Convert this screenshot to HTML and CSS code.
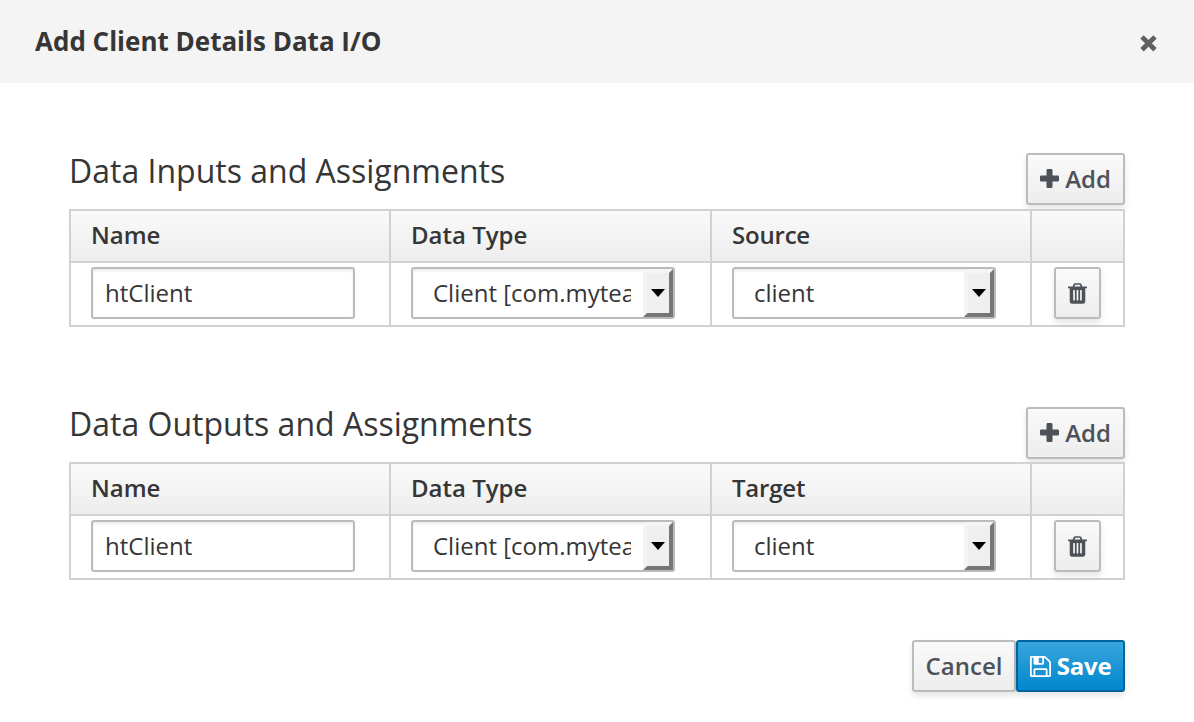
FILE: index.html
```html
<!DOCTYPE html>
<html lang="en">
<head>
<meta charset="utf-8">
<title>Add Client Details Data I/O</title>
<link rel="stylesheet" href="styles.css">
</head>
<body>
<svg class="symbols" width="0" height="0" aria-hidden="true">
  <symbol id="plus" viewBox="0 0 19 19"><path d="M7.8 0h3.4q1.3 0 1.3 1.3v5.2h5.200q1.300 0 1.300 1.300v3.400q0 1.300-1.300 1.300h-5.200v5.200q0 1.300-1.300 1.300H7.800q-1.300 0-1.300-1.300v-5.200H1.300Q0 12.500 0 11.200V7.800q0-1.300 1.300-1.300h5.200V1.300Q6.500 0 7.800 0z" fill="currentColor"/></symbol>
  <symbol id="trash" viewBox="0 0 1408 1536"><path transform="translate(0 1408) scale(1 -1)" fill="currentColor" fill-rule="evenodd" d="M512 160v704q0 14 -9 23t-23 9h-64q-14 0 -23 -9t-9 -23v-704q0 -14 9 -23t23 -9h64q14 0 23 9t9 23zM768 160v704q0 14 -9 23t-23 9h-64q-14 0 -23 -9t-9 -23v-704q0 -14 9 -23t23 -9h64q14 0 23 9t9 23zM1024 160v704q0 14 -9 23t-23 9h-64q-14 0 -23 -9t-9 -23v-704q0 -14 9 -23t23 -9h64q14 0 23 9t9 23zM480 1152h448l-48 117q-7 9 -17 11h-317q-10 -2 -17 -11zM1408 1120v-64q0 -14 -9 -23t-23 -9h-96v-948q0 -83 -47 -143.5t-113 -60.5h-832q-66 0 -113 58.5t-47 141.5v952h-96q-14 0 -23 9t-9 23v64q0 14 9 23t23 9h309l70 167q15 37 54 63t79 26h320q40 0 79 -26t54 -63l70 -167h309q14 0 23 -9t9 -23z"/></symbol>
  <symbol id="save" viewBox="0 0 1536 1536"><path transform="translate(0 1408) scale(1 -1)" fill="currentColor" fill-rule="evenodd" d="M384 0h768v384h-768v-384zM1280 0h128v896q0 14 -10 38.5t-20 34.5l-281 281q-10 10 -34 20t-39 10v-416q0 -40 -28 -68t-68 -28h-576q-40 0 -68 28t-28 68v416h-128v-1280h128v416q0 40 28 68t68 28h832q40 0 68 -28t28 -68v-416zM896 928v320q0 13 -9.5 22.5t-22.5 9.5h-192q-13 0 -22.5 -9.5t-9.5 -22.5v-320q0 -13 9.5 -22.5t22.5 -9.5h192q13 0 22.5 9.5t9.5 22.5zM1536 896v-928q0 -40 -28 -68t-68 -28h-1344q-40 0 -68 28t-28 68v1344q0 40 28 68t68 28h928q40 0 88 -20t76 -48l280 -280q28 -28 48 -76t20 -88z"/></symbol>
  <symbol id="close" viewBox="0 0 17 17"><path d="M2 1.900l13 12.800M15 1.900L2 14.700" stroke="currentColor" stroke-width="4.800" fill="none"/></symbol>
</svg>
<div class="modal">
  <header class="modal-header">
    <h1 class="modal-title">Add Client Details Data I/O</h1>
    <button class="close" aria-label="Close"><svg width="17" height="17"><use href="#close"/></svg></button>
  </header>
  <main class="modal-body">
    <section class="assignments inputs">
      <div class="section-head">
        <h2 class="section-title">Data Inputs and Assignments</h2>
        <button class="btn add"><svg width="19" height="19"><use href="#plus"/></svg><span>Add</span></button>
      </div>
      <div class="grid">
        <div class="th">Name</div><div class="th">Data Type</div><div class="th third">Source</div><div class="th"></div>
        <div class="td"><div class="field">htClient</div></div>
        <div class="td"><div class="field select"><span class="value">Client [com.myteam</span><span class="drop"><svg width="14" height="9" viewBox="0 0 14 9"><path d="M0 0h14L7 8z"/></svg></span></div></div>
        <div class="td"><div class="field select"><span class="value">client</span><span class="drop"><svg width="14" height="9" viewBox="0 0 14 9"><path d="M0 0h14L7 8z"/></svg></span></div></div>
        <div class="td action"><button class="btn delete" aria-label="Delete"><svg width="19" height="21"><use href="#trash"/></svg></button></div>
      </div>
    </section>
    <section class="assignments outputs">
      <div class="section-head">
        <h2 class="section-title">Data Outputs and Assignments</h2>
        <button class="btn add"><svg width="19" height="19"><use href="#plus"/></svg><span>Add</span></button>
      </div>
      <div class="grid">
        <div class="th">Name</div><div class="th">Data Type</div><div class="th third">Target</div><div class="th"></div>
        <div class="td"><div class="field">htClient</div></div>
        <div class="td"><div class="field select"><span class="value">Client [com.myteam</span><span class="drop"><svg width="14" height="9" viewBox="0 0 14 9"><path d="M0 0h14L7 8z"/></svg></span></div></div>
        <div class="td"><div class="field select"><span class="value">client</span><span class="drop"><svg width="14" height="9" viewBox="0 0 14 9"><path d="M0 0h14L7 8z"/></svg></span></div></div>
        <div class="td action"><button class="btn delete" aria-label="Delete"><svg width="19" height="21"><use href="#trash"/></svg></button></div>
      </div>
    </section>
  </main>
  <footer class="modal-footer">
    <button class="btn cancel">Cancel</button>
    <button class="btn save"><svg width="21" height="21"><use href="#save"/></svg><span>Save</span></button>
  </footer>
</div>
</body>
</html>
```
FILE: styles.css
```css
* { box-sizing: border-box; }
body { margin: 0; background: #fff; color: #363636; font: 24px/32px "Open Sans", sans-serif; }
.symbols { display: none; }
svg { display: block; flex: none; }
.modal { width: 1194px; height: 722px; overflow: hidden; }
.modal-header { height: 83px; padding: 0 37px 1px 35px; display: flex; justify-content: space-between; align-items: center; background: #f4f4f4; }
.modal-title { margin: 0; font-size: 26px; line-height: 36px; font-weight: 700; white-space: nowrap; }
.close { border: 0; padding: 4px 0 0; background: none; color: #606060; }
.modal-body { padding: 70px 69px 0; }
.section-head { display: flex; justify-content: space-between; align-items: flex-start; height: 56px; }
.outputs { margin-top: 80px; }
.outputs .section-head { height: 55px; }
.section-title { margin: 0; font-size: 32px; line-height: 36px; font-weight: 400; white-space: nowrap; }
.outputs .section-title { margin-top: -1px; }
.btn { height: 52px; display: flex; align-items: center; justify-content: center; padding: 0; border: 2px solid #bbb; border-radius: 3px; background: linear-gradient(#fafafa, #ededed); box-shadow: 0 4px 6px rgba(3, 3, 3, .1); color: #4d5258; font: 600 24px/32px "Open Sans", sans-serif; white-space: nowrap; }
.add { width: 99px; gap: 6px; }
.add svg { margin-bottom: 1px; }
.grid { display: grid; grid-template: 50px 62px / 318px 319px 318px 91px; gap: 2px; padding: 2px; background: #d1d1d1; position: relative; }
.th { padding: 8px 20px; background: linear-gradient(#fafafa, #ededed); font-weight: 600; }
.third { letter-spacing: -.2px; }
.td { padding: 4px 20px; background: #fff; }
.action { padding-left: 22px; }
.delete { width: 47px; }
.delete svg { margin-top: 1px; }
.field { width: 264px; height: 52px; padding: 8px 12px; border: 2px solid #bbb; border-radius: 3px; box-shadow: inset 0 2px 3px rgba(3, 3, 3, .08); line-height: 32px; white-space: nowrap; }
.select { display: flex; padding: 0 0 0 20px; }
.value { width: 198px; padding: 8px 0; overflow: hidden; }
.drop { width: 30px; height: 48px; margin-left: auto; display: flex; align-items: center; justify-content: center; border: 4px solid; border-color: #f4f4f4 #767676 #767676 #f4f4f4; background: #efefef; }
.modal-footer { display: flex; justify-content: flex-end; padding: 60px 69px 0; }
.cancel { width: 104px; }
.save { width: 109px; gap: 6px; border-color: #00659c; background: linear-gradient(#39a5dc, #0088ce); color: #fff; font-weight: 700; letter-spacing: -.2px; }
```
